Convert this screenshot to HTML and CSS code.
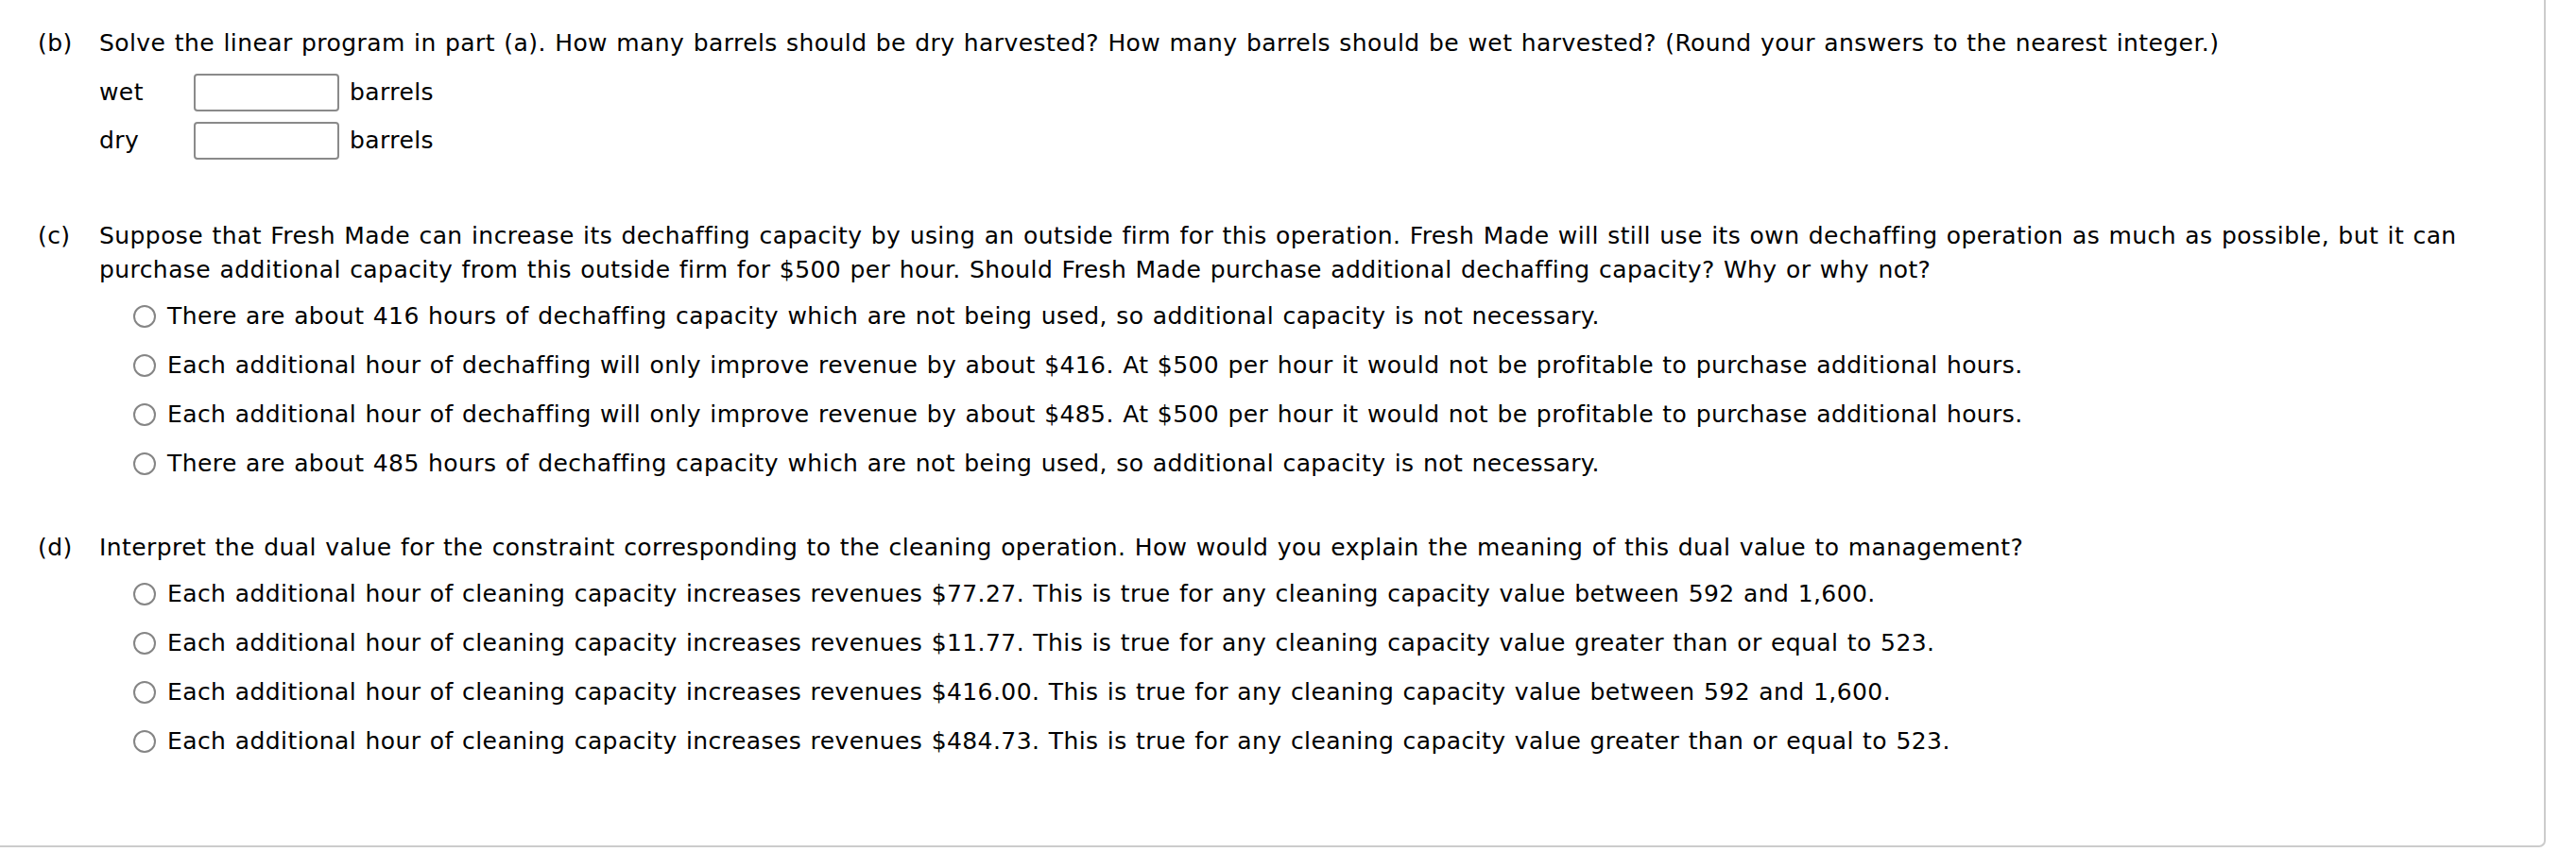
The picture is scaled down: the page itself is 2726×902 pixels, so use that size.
FILE: index.html
```html
<!DOCTYPE html>
<html>
<head>
<meta charset="utf-8">
<link rel="stylesheet" href="styles.css">
</head>
<body>
<div class="frame">
  <section class="part part-b">
    <div class="q">
      <span class="lbl">(b)</span>
      <div class="qtext">Solve the linear program in part (a). How many barrels should be dry harvested? How many barrels should be wet harvested? (Round your answers to the nearest integer.)</div>
    </div>
    <div class="fields">
      <div class="field"><span class="fname">wet</span><span class="box"></span><span class="unit">barrels</span></div>
      <div class="field"><span class="fname">dry</span><span class="box"></span><span class="unit">barrels</span></div>
    </div>
  </section>

  <section class="part part-c">
    <div class="q">
      <span class="lbl">(c)</span>
      <div class="qtext">Suppose that Fresh Made can increase its dechaffing capacity by using an outside firm for this operation. Fresh Made will still use its own dechaffing operation as much as possible, but it can purchase additional capacity from this outside firm for $500 per hour. Should Fresh Made purchase additional dechaffing capacity? Why or why not?</div>
    </div>
    <ul class="opts">
      <li class="opt"><span class="radio"></span><span>There are about 416 hours of dechaffing capacity which are not being used, so additional capacity is not necessary.</span></li>
      <li class="opt"><span class="radio"></span><span>Each additional hour of dechaffing will only improve revenue by about $416. At $500 per hour it would not be profitable to purchase additional hours.</span></li>
      <li class="opt"><span class="radio"></span><span>Each additional hour of dechaffing will only improve revenue by about $485. At $500 per hour it would not be profitable to purchase additional hours.</span></li>
      <li class="opt"><span class="radio"></span><span>There are about 485 hours of dechaffing capacity which are not being used, so additional capacity is not necessary.</span></li>
    </ul>
  </section>

  <section class="part part-d">
    <div class="q">
      <span class="lbl">(d)</span>
      <div class="qtext">Interpret the dual value for the constraint corresponding to the cleaning operation. How would you explain the meaning of this dual value to management?</div>
    </div>
    <ul class="opts">
      <li class="opt"><span class="radio"></span><span>Each additional hour of cleaning capacity increases revenues $77.27. This is true for any cleaning capacity value between 592 and 1,600.</span></li>
      <li class="opt"><span class="radio"></span><span>Each additional hour of cleaning capacity increases revenues $11.77. This is true for any cleaning capacity value greater than or equal to 523.</span></li>
      <li class="opt"><span class="radio"></span><span>Each additional hour of cleaning capacity increases revenues $416.00. This is true for any cleaning capacity value between 592 and 1,600.</span></li>
      <li class="opt"><span class="radio"></span><span>Each additional hour of cleaning capacity increases revenues $484.73. This is true for any cleaning capacity value greater than or equal to 523.</span></li>
    </ul>
  </section>
</div>
</body>
</html>
```

FILE: styles.css
```css
html, body {
  margin: 0;
  padding: 0;
  background: #fff;
}
body {
  font-family: "DejaVu Sans", Verdana, sans-serif;
  font-size: 25px;
  line-height: 36px;
  letter-spacing: 0.42px;
  word-spacing: 1px;
  color: #000;
}
.frame {
  box-sizing: border-box;
  width: 2694px;
  padding: 28px 40px 92px 40px;
  border-right: 2px solid #cccccc;
  border-bottom: 2px solid #cccccc;
  border-bottom-right-radius: 7px;
}
.part-c {
  margin-top: 63px;
}
.part-d {
  margin-top: 53px;
}
.q {
  display: flex;
}
.lbl {
  flex: 0 0 65px;
}
.qtext {
  flex: 1;
}
.fields {
  display: flex;
  flex-direction: column;
  gap: 11px;
  margin: 14px 0 0 65px;
}
.field {
  display: flex;
  align-items: center;
  height: 40px;
}
.fname {
  width: 100px;
}
.box {
  box-sizing: border-box;
  width: 154px;
  height: 40px;
  border: 2px solid #8a8a8a;
  border-radius: 4px;
  background: #fff;
}
.unit {
  margin-left: 11px;
}
.opts {
  list-style: none;
  margin: 13px 0 0 101px;
  padding: 0;
  display: flex;
  flex-direction: column;
  gap: 16px;
}
.opt {
  display: flex;
  align-items: center;
  height: 36px;
}
.radio {
  box-sizing: border-box;
  flex: 0 0 24px;
  width: 24px;
  height: 24px;
  border: 2px solid #858585;
  border-radius: 50%;
  margin-right: 12px;
  background: #fff;
}
```
